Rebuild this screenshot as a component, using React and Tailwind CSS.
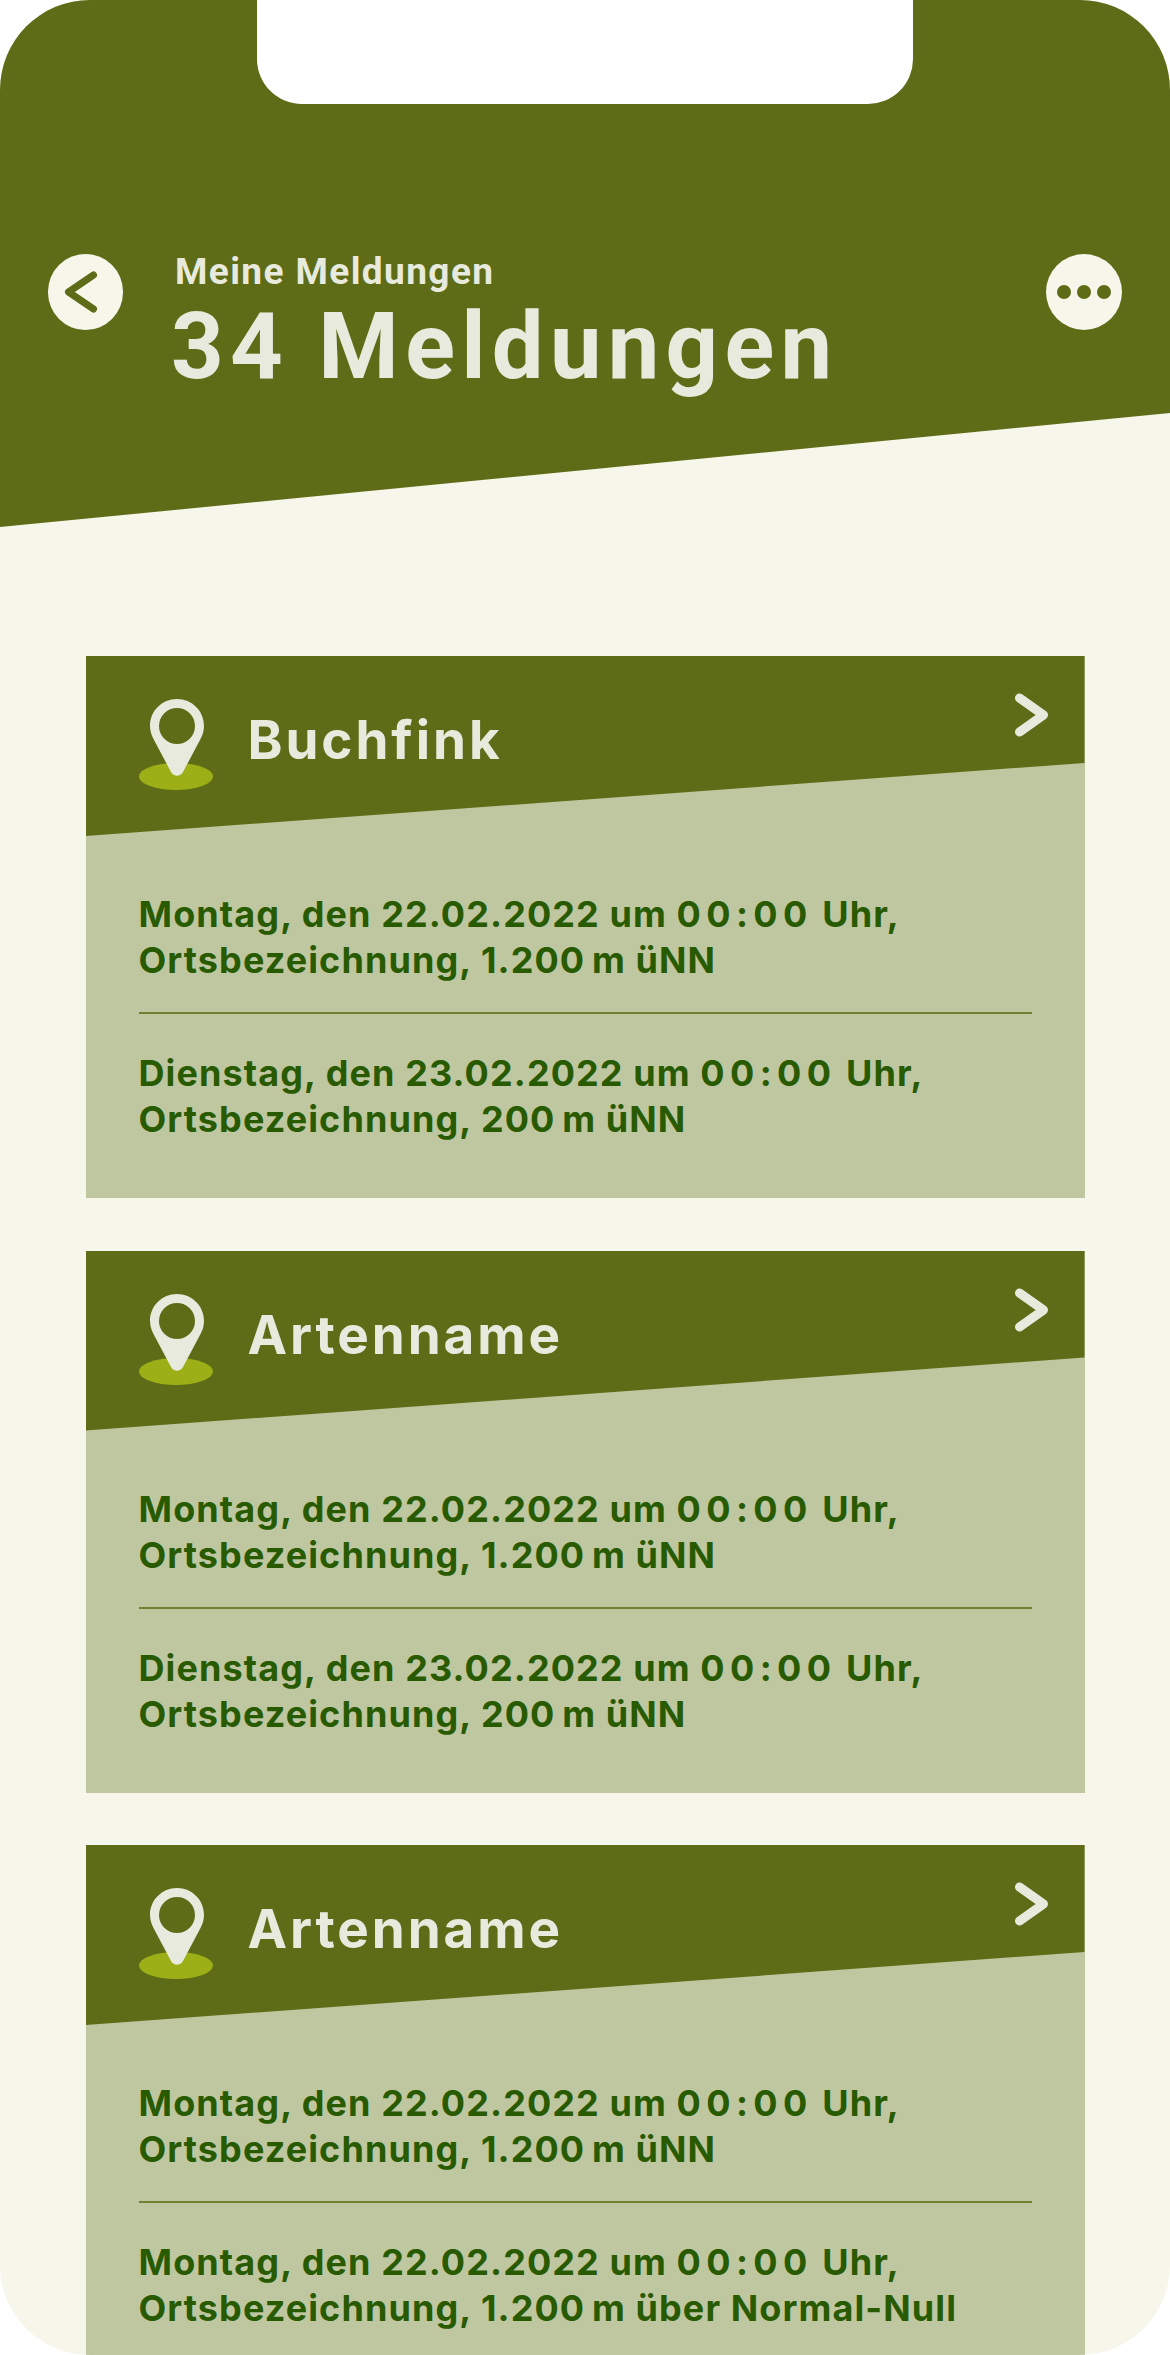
import React from 'react';

const first = { day: 'Montag, den 22.02.2022', place: 'Ortsbezeichnung, 1.200\u2009m üNN' };
const second = { day: 'Dienstag, den 23.02.2022', place: 'Ortsbezeichnung, 200\u2009m üNN' };
const third = { day: 'Montag, den 22.02.2022', place: 'Ortsbezeichnung, 1.200\u2009m über Normal-Null' };

const reports = [
  { title: 'Buchfink', entries: [first, second] },
  { title: 'Artenname', entries: [first, second] },
  { title: 'Artenname', entries: [first, third] },
];

function PinIcon() {
  return (
    <svg width="74" height="91" viewBox="0 0 74 91" className="shrink-0">
      <ellipse cx="37" cy="77.5" rx="37" ry="13.5" fill="#9caf17" />
      <path
        fillRule="evenodd"
        fill="#e8eade"
        d="M38 0C53 0 65 12 65 27c0 5-1.500 9-3.500 13L44 73c-3 5-9 5-12 0L14.500 40C12.500 36 11 32 11 27 11 12 23 0 38 0ZM38 9a18 18 0 1 0 0 36 18 18 0 0 0 0-36Z"
      />
    </svg>
  );
}

function Chevron() {
  return (
    <svg width="38" height="46" viewBox="0 0 38 46" className="shrink-0">
      <path d="M6.500 6 30.500 23 6.500 40" fill="none" stroke="#e8eade" strokeWidth="9" strokeLinecap="round" strokeLinejoin="round" />
    </svg>
  );
}

function ReportCard({ title, entries }) {
  return (
    <section className="bg-[#bfc7a1] h-[542px]">
      {/* slanted card head */}
      <div className="h-[180px] bg-[#5e6c17] [clip-path:polygon(0_0,100%_0,100%_107px,0_180px)] flex items-start pl-[53px] pr-[34px] pt-[43px]">
        <PinIcon />
        <h2 className="ml-[35px] mt-[9px] text-[53px] leading-[64px] font-bold tracking-[2.9px] text-[#e8eade]">
          {title}
        </h2>
        <div className="ml-auto -mt-[7px]">
          <Chevron />
        </div>
      </div>

      <div className="px-[53px] pt-[55px]">
        {entries.map((entry, idx) => (
          <p
            key={idx}
            className={
              idx === 0
                ? 'pb-[29px] border-b-2 border-[#6f8030] text-[36px] leading-[46px] font-bold tracking-[1.1px] text-[#285a00] whitespace-nowrap'
                : 'pt-[36px] text-[36px] leading-[46px] font-bold tracking-[1.1px] text-[#285a00] whitespace-nowrap'
            }
          >
            {entry.day} um <span className="tracking-[5.4px]">00:00</span> Uhr,
            <br />
            {entry.place}
          </p>
        ))}
      </div>
    </section>
  );
}

export default function App() {
  return (
    <div className="w-[1170px] h-[2355px] bg-white font-['Inter',sans-serif]">
      <div className="relative h-full rounded-[90px] overflow-hidden bg-[#f6f6eb]">
        {/* cut-out for the device notch */}
        <div className="absolute top-0 left-[257px] w-[656px] h-[104px] bg-white rounded-b-[45px] z-10" />

        <header className="h-[527px] bg-[#5e6c17] [clip-path:polygon(0_0,100%_0,100%_413px,0_527px)] flex items-start justify-between pl-[48px] pr-[48px] pt-[254px]">
          <button className="w-[75px] h-[76px] rounded-full bg-[#f6f6eb] flex items-center justify-center shrink-0">
            <svg width="44" height="46" viewBox="0 0 44 46">
              <path d="M29.500 6 4.500 23 29.500 40" fill="none" stroke="#5e6c17" strokeWidth="7" strokeLinecap="round" strokeLinejoin="round" />
            </svg>
          </button>

          <div className="flex-1 pl-[48px] -mt-[4px] font-['Roboto',sans-serif]">
            <p className="pl-[4px] text-[37px] leading-[44px] font-bold tracking-[1.4px] text-[#e8eade]">Meine Meldungen</p>
            <h1 className="mt-[3px] text-[92px] leading-[100px] font-bold tracking-[6.3px] text-[#e8eade] whitespace-nowrap">34 Meldungen</h1>
          </div>

          <button className="w-[76px] h-[76px] rounded-full bg-[#f6f6eb] flex items-center justify-center gap-[6px] shrink-0">
            <span className="w-[14px] h-[14px] rounded-full bg-[#5e6c17]" />
            <span className="w-[14px] h-[14px] rounded-full bg-[#5e6c17]" />
            <span className="w-[14px] h-[14px] rounded-full bg-[#5e6c17]" />
          </button>
        </header>

        <main className="px-[85.5px] pt-[129px] flex flex-col gap-[52.5px]">
          {reports.map((report, idx) => (
            <ReportCard key={idx} title={report.title} entries={report.entries} />
          ))}
        </main>
      </div>
    </div>
  );
}
